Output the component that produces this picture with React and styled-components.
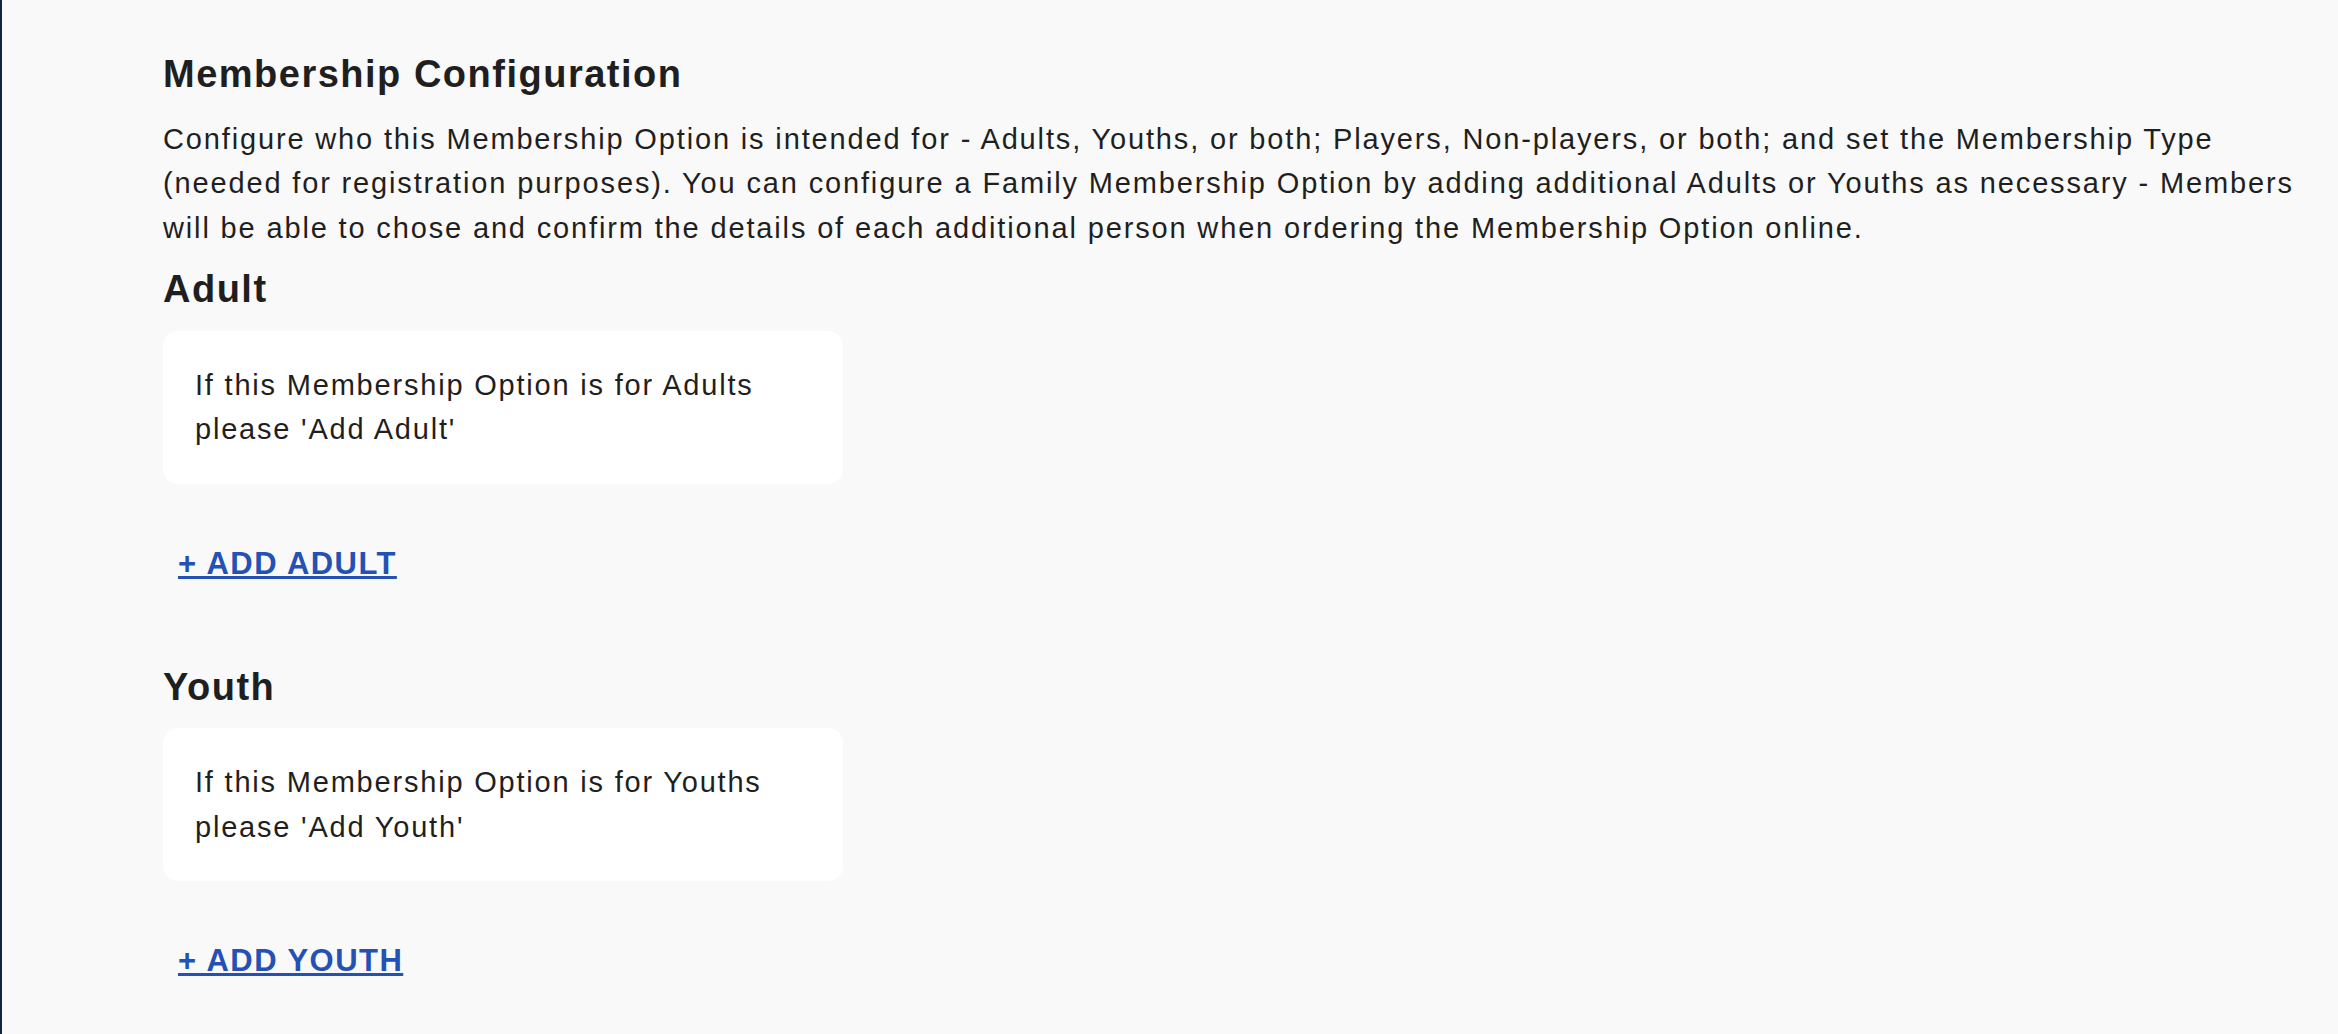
import React from 'react'
import styled, { createGlobalStyle } from 'styled-components'

const GlobalStyle = createGlobalStyle`
html, body {
    margin: 0;
    padding: 0;
    background: #f9f9f9;
}
* {
    box-sizing: border-box;
}
`

const Page = styled.div`
min-height: 100vh;
border-left: 2px solid #12263a;
padding: 52px 28px 40px 161px;
font-family: 'Liberation Sans', Arial, sans-serif;
color: #1f1f1f;
`

const Title = styled.h2`
margin: 0;
font-size: 38px;
line-height: 1.2;
font-weight: 700;
letter-spacing: 1.5px;
`

const Intro = styled.p`
margin: 19px 0 0 0;
font-size: 29px;
line-height: 44.5px;
letter-spacing: 1.85px;
`

const InfoCard = styled.div`
width: 680px;
margin-top: 18px;
padding: 32px;
background: #ffffff;
border-radius: 15px;
font-size: 29px;
line-height: 44.5px;
letter-spacing: 1.8px;
`

const AddButton = styled.button`
display: block;
margin-top: 62px;
padding: 0 15px;
background: none;
border: none;
cursor: pointer;
font-family: inherit;
font-size: 31px;
line-height: 36px;
font-weight: 700;
letter-spacing: 1.45px;
color: #2451b5;
text-decoration: underline;
text-decoration-thickness: 3px;
text-underline-offset: 2px;
text-transform: uppercase;
`

const Section = styled.section`
margin-top: ${props => props.gap}px;
`

const PersonBlock = ({ title, text, button, gap }) => {
    return (
        <Section gap={gap}>
            <Title>{title}</Title>
            <InfoCard>{text}</InfoCard>
            <AddButton>{button}</AddButton>
        </Section>
    )
}

export default function App() {
    return (
        <>
            <GlobalStyle />
            <Page>
                <Title>Membership Configuration</Title>
                <Intro>
                    Configure who this Membership Option is intended for - Adults, Youths, or both; Players, Non-players, or both; and set the Membership Type (needed for registration purposes). You can configure a Family Membership Option by adding additional Adults or Youths as necessary - Members will be able to chose and confirm the details of each additional person when ordering the Membership Option online.
                </Intro>
                <PersonBlock
                    gap={17}
                    title="Adult"
                    text="If this Membership Option is for Adults please 'Add Adult'"
                    button="+ Add Adult"
                />
                <PersonBlock
                    gap={83}
                    title="Youth"
                    text="If this Membership Option is for Youths please 'Add Youth'"
                    button="+ Add Youth"
                />
            </Page>
        </>
    )
}
